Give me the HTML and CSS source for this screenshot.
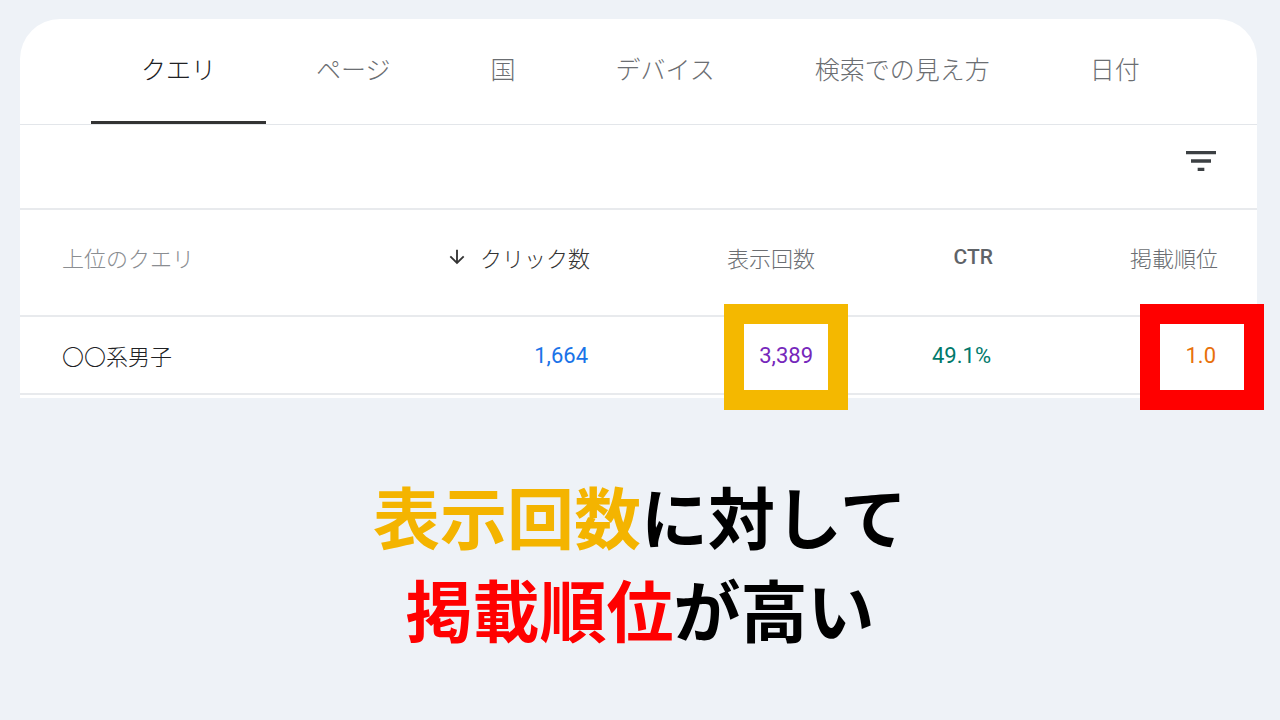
FILE: index.html
```html
<!DOCTYPE html>
<html lang="ja">
  <head>
    <meta charset="UTF-8" />
    <meta name="viewport" content="width=device-width, initial-scale=1.0" />
    <title>検索パフォーマンス</title>
    <link rel="stylesheet" href="styles.css">
  </head>
  <body>
    <section class="report-card">
      <!-- Tabs -->
      <nav class="tabs">
        <a class="tab active">クエリ</a>
        <a class="tab">ページ</a>
        <a class="tab">国</a>
        <a class="tab">デバイス</a>
        <a class="tab">検索での見え方</a>
        <a class="tab">日付</a>
      </nav>

      <!-- Toolbar -->
      <div class="toolbar">
        <svg class="filter-icon" viewBox="0 0 24 24">
          <path d="M10 18h4v-2h-4v2zM3 6v2h18V6H3zm3 7h12v-2H6v2z" />
        </svg>
      </div>

      <!-- Table -->
      <div class="table">
        <div class="row head">
          <div class="cell query">上位のクエリ</div>
          <div class="cell num sorted">
            <svg class="sort-icon" viewBox="0 0 24 24">
              <path d="M20 12l-1.41-1.41L13 16.17V4h-2v12.17l-5.58-5.59L4 12l8 8 8-8z" />
            </svg>
            クリック数
          </div>
          <div class="cell num">表示回数</div>
          <div class="cell num latin">CTR</div>
          <div class="cell num">掲載順位</div>
        </div>
        <div class="row data">
          <div class="cell query">〇〇系男子</div>
          <div class="cell num clicks">1,664</div>
          <div class="cell num impressions">3,389</div>
          <div class="cell num ctr">49.1%</div>
          <div class="cell num position">1.0</div>
        </div>
      </div>

      <!-- Highlight markers -->
      <div class="marker marker-yellow"></div>
      <div class="marker marker-red"></div>
    </section>

    <p class="headline">
      <span class="hl-yellow">表示回数</span>に対して<br />
      <span class="hl-red">掲載順位</span>が高い
    </p>
  </body>
</html>
```

FILE: styles.css
```css
html,
body {
  margin: 0;
  padding: 0;
  width: 100%;
  height: 100%;
  background: #eef2f7;
  font-family: "Noto Sans CJK JP", "Noto Sans", sans-serif;
}

/* Card */
.report-card {
  position: relative;
  width: 1237px;
  margin: 19px 0 0 20px;
  padding-bottom: 3px;
  background: #fff;
  border-radius: 40px 40px 0 0;
}

/* Tabs */
.tabs {
  display: flex;
  height: 105px;
  padding-left: 71px;
  border-bottom: 1px solid #e3e6ea;
}

.tabs .tab {
  display: flex;
  align-items: center;
  box-sizing: border-box;
  height: 105px;
  padding: 0 50px 4px;
  font-size: 25px;
  font-weight: 300;
  color: #6b6e72;
  text-decoration: none;
  border-bottom: 3px solid transparent;
}

.tabs .tab.active {
  color: #202124;
  border-bottom-color: #333;
}

/* Toolbar */
.toolbar {
  display: flex;
  justify-content: flex-end;
  box-sizing: border-box;
  height: 85px;
  padding: 16px 36px 0 0;
  border-bottom: 2px solid #e8eaed;
}

.toolbar .filter-icon {
  width: 40px;
  height: 40px;
  fill: #3c4043;
}

/* Table */
.table .row {
  display: grid;
  grid-template-columns: 300px 228px 225px 178px 225px;
  align-items: center;
  padding-left: 42px;
}

.table .row.head {
  height: 107px;
  padding-bottom: 12px;
  box-sizing: border-box;
  border-bottom: 2px solid #e8eaed;
  font-size: 22px;
  font-weight: 300;
  color: #6b6e72;
}

.table .row.data {
  height: 76px;
  border-bottom: 2px solid #e8eaed;
  font-size: 22px;
  font-weight: 300;
  color: #202124;
}

.table .cell.num {
  text-align: right;
}

.table .head .cell.query {
  color: #8a8d91;
}

.table .head .cell.sorted {
  display: flex;
  align-items: center;
  justify-content: flex-end;
  gap: 12px;
  color: #333;
}

.table .sort-icon {
  width: 22px;
  height: 22px;
  fill: #333;
}

.table .head .cell.latin {
  font-family: Roboto, "Liberation Sans", sans-serif;
  font-weight: 500;
  font-size: 21px;
  color: #5f6368;
}

.table .data .cell.num {
  font-family: Roboto, "Liberation Sans", sans-serif;
  font-size: 22px;
  font-weight: 400;
  padding-right: 2px;
}

.table .data .clicks {
  color: #1a73e8;
}

.table .data .impressions {
  color: #7627bb;
}

.table .data .ctr {
  color: #00796b;
}

.table .data .position {
  color: #e8710a;
  padding-right: 4px;
}

/* Markers over the numbers */
.marker {
  position: absolute;
  top: 285px;
  box-sizing: border-box;
  width: 124px;
  height: 106px;
  border: 20px solid;
}

.marker-yellow {
  left: 704px;
  border-color: #f4b800;
}

.marker-red {
  left: 1120px;
  border-color: #ff0000;
}

/* Headline */
.headline {
  margin: 70px 0 0;
  font-size: 67px;
  font-weight: 700;
  line-height: 93px;
  text-align: center;
  color: #000;
}

.headline .hl-yellow {
  color: #f4b400;
}

.headline .hl-red {
  color: #ff0000;
}
```
